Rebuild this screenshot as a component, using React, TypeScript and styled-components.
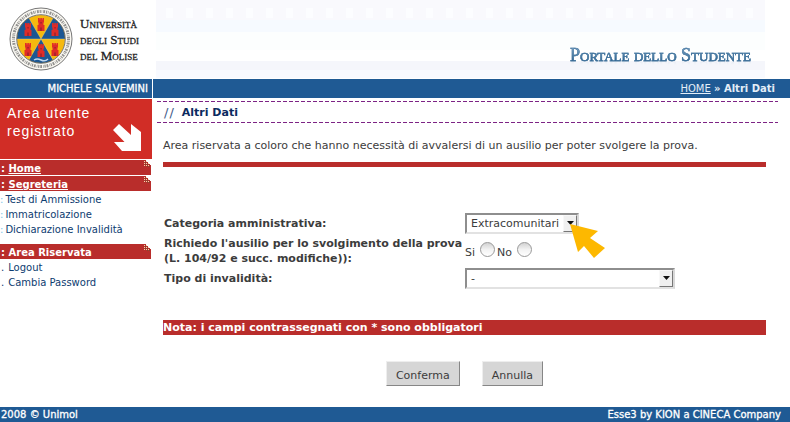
import React from "react";
import styled, { createGlobalStyle, css } from "styled-components";

const BLUE = "#1f5a94";
const RED = "#b92d2b";
const LINK = "#0d3c70";
const INK = "#3c3c3c";

const GlobalStyle = createGlobalStyle`
  * { box-sizing: border-box; }
  body {
    margin: 0;
    background: #fff;
    color: ${INK};
    font-family: "DejaVu Sans", Verdana, sans-serif;
    font-size: 11px;
    line-height: 15px;
  }
`;

const Header = styled.header`
  display: flex;
  height: 79px;
`;

const Brand = styled.div`
  display: flex;
  flex: none;
  align-items: center;
  gap: 6px;
  width: 156px;
  padding-left: 8px;
`;

const BrandName = styled.div`
  font-family: "Liberation Serif", serif;
  font-size: 13px;
  line-height: 16px;
  font-variant: small-caps;
  color: #222;
  -webkit-text-stroke: 0.3px #222;
  white-space: nowrap;
`;

const Banner = styled.div`
  display: flex;
  flex: 1;
  justify-content: flex-end;
  align-items: flex-end;
  margin-right: 25px;
  padding: 0 14px 14px 0;
  background:
    repeating-linear-gradient(90deg, transparent 0 10px, #fcfdff 10px 17px, transparent 17px 20px) 0 8px / 100% 10px no-repeat,
    linear-gradient(#f9f9fd 0 20px, #f6faff 20px 32px, #fcfefe 32px 50px, #fff 50px 61px, #f5f6fb 61px 70px, #f8faff 70px 78px, #fff 78px);
`;

const PortalName = styled.div`
  font-family: "Liberation Serif", serif;
  font-size: 18px;
  line-height: 20px;
  font-variant: small-caps;
  color: transparent;
  background: linear-gradient(#7fa6c9 15%, #43769f 60%, #1d5588 85%);
  background-clip: text;
  -webkit-text-stroke: 0.5px #47779f;
  -webkit-box-reflect: below -8px linear-gradient(transparent 60%, rgba(0, 0, 0, 0.15));
  white-space: nowrap;
`;

const TopBar = styled.div`
  display: flex;
  height: 19px;
  line-height: 20px;
  color: #fff;
  background: ${BLUE};
`;

const UserName = styled.div`
  flex: none;
  width: 153px;
  padding-right: 4px;
  border-right: 1px solid #fff;
  font-size: 10px;
  text-align: right;
  -webkit-text-stroke: 0.3px #fff;
`;

const Breadcrumb = styled.nav`
  flex: 1;
  padding-right: 15px;
  font-size: 10px;
  text-align: right;
  color: #e4eef8;

  a { color: inherit; }
`;

const Body = styled.div`
  display: flex;
`;

const Sidebar = styled.aside`
  flex: none;
  width: 152px;
  padding-top: 1px;
`;

const AreaBanner = styled.div`
  display: flex;
  justify-content: space-between;
  height: 60px;
  margin-bottom: 1px;
  padding: 5px 11px 8px 7px;
  color: #fff;
  background: #d12d26;
  font-family: "Liberation Sans", Arial, sans-serif;
  font-size: 14px;
  line-height: 18px;
  letter-spacing: 1px;

  svg { flex: none; align-self: flex-end; margin-left: -10px; }
`;

const MenuHeading = styled.h2`
  display: flex;
  justify-content: space-between;
  height: 15px;
  margin: 0 1px 1px 0;
  padding-left: 1px;
  color: #fff;
  background: ${RED};
  font-size: 10px;
  line-height: 17px;

  a { color: inherit; }
`;

const Menu = styled.ul<{ $dotted?: boolean }>`
  margin: 0;
  padding: 0 0 7px;
  list-style: none;
  font-size: 10px;
  line-height: 15px;
  color: ${(p) => (p.$dotted ? LINK : "#7fc4e8")};

  li { display: flex; gap: ${(p) => (p.$dotted ? 4 : 2)}px; padding-left: ${(p) => (p.$dotted ? 1 : 0)}px; }
  a { color: ${LINK}; text-decoration: none; white-space: nowrap; }
`;

const Main = styled.main`
  flex: 1;
  padding: 3px 12px 0 5px;
`;

const dashes = css`
  repeating-linear-gradient(90deg, #7d2385 0 4px, transparent 4px 6px)
`;

const Title = styled.h1`
  display: flex;
  gap: 7px;
  margin: 0 0 15px;
  padding: 4px 7px 3px;
  color: #0b2a5e;
  background: ${dashes} 0 0 / 100% 1px no-repeat, ${dashes} 0 100% / 100% 1px no-repeat;
  font-size: 11px;
  line-height: 15px;

  span { font-size: 13px; font-weight: normal; letter-spacing: 1px; color: #3f5b88; }
`;

const Content = styled.div`
  margin: 0 12px 0 6px;
`;

const Intro = styled.p`
  margin: 0 0 9px;
`;

const Rule = styled.hr`
  height: 5px;
  margin: 0 0 45px;
  border: 0;
  background: ${RED};
`;

const Fields = styled.div`
  display: grid;
  grid-template-columns: 301px 1fr;
  row-gap: 1px;
  padding-left: 1px;
`;

const Label = styled.label`
  align-self: center;
  font-weight: bold;
`;

const Control = styled.div`
  display: flex;
  align-items: center;
  min-height: 22px;
`;

const SelectBox = styled.div<{ $wide?: boolean }>`
  position: relative;
  width: ${(p) => (p.$wide ? 210 : 114)}px;
`;

const Select = styled.select`
  display: block;
  appearance: none;
  width: 100%;
  height: 21px;
  padding: 1px 16px 0 4px;
  border: 2px solid #8e8e8e;
  border-right-color: #d8d8d8;
  border-bottom-color: #e2e2e2;
  border-radius: 0;
  background: #fff;
  color: ${INK};
  font: 11px "DejaVu Sans", sans-serif;
`;

const SelectArrow = styled.span`
  position: absolute;
  top: 2px;
  right: 2px;
  bottom: 2px;
  display: flex;
  align-items: center;
  justify-content: center;
  width: 14px;
  border: 1px solid #f8f8f8;
  border-right-color: #777;
  border-bottom-color: #777;
  background: #f0f0f0;
  pointer-events: none;
`;

const Pointer = styled.svg`
  position: absolute;
  top: 11px;
  left: 105px;
  pointer-events: none;
`;

const RadioGroup = styled.div`
  display: flex;
  align-items: center;
  height: 31px;
  gap: 2px;

  label { padding-top: 4px; }
`;

const Radio = styled.input`
  appearance: none;
  width: 15px;
  height: 15px;
  margin: 0 0 3px 3px;
  border: 1px solid #999;
  border-radius: 50%;
  background: linear-gradient(#d2d2d2, #f2f2f2 50%, #fff);

  &:checked { background: radial-gradient(#333 0 3px, #eee 4px); }
`;

const Note = styled.p`
  margin: 31px 0 26px;
  color: #fff;
  background: ${RED};
  font-weight: bold;
  line-height: 15px;
`;

const Actions = styled.div`
  display: flex;
  justify-content: center;
  gap: 22px;
  margin-bottom: 21px;
`;

const Button = styled.button`
  height: 25px;
  padding: 3px 9px 0;
  border: 1px solid #eee;
  border-right-color: #868686;
  border-bottom-color: #868686;
  background: #d6d6d6;
  color: ${INK};
  font: 11px "DejaVu Sans", sans-serif;
`;

const Footer = styled.footer`
  display: flex;
  justify-content: space-between;
  padding: 1px 9px 0 1px;
  color: #fff;
  background: ${BLUE};
  font-size: 10px;
  line-height: 14px;
  -webkit-text-stroke: 0.3px #fff;
`;

const towers = [
  [33, 11], [20, 16], [47, 16], [20, 36], [47, 36], [33, 37],
];

const Seal = () => (
  <svg width="66" height="66" viewBox="0 0 66 66" role="img" aria-label="Sigillo">
    <defs>
      <clipPath id="disc"><circle cx="33" cy="32" r="24" /></clipPath>
    </defs>
    <circle cx="33" cy="32" r="31" fill="#faf8f2" stroke="#777" strokeWidth="1" />
    <circle cx="33" cy="32" r="27.500" fill="none" stroke="#666" strokeWidth="3" strokeDasharray="1.200 .8 .6 1.100 1.800 .9" opacity=".7" />
    <g clipPath="url(#disc)">
      <rect width="66" height="66" fill="#f5b90f" />
      <path d="M33 32 4 32V0H14.500ZM33 32 62 32V0H51.500ZM33 32 16 62H50Z" fill="#1c5794" />
      <path d="M4 32H62M14.500 0 51.500 64M51.500 0 14.500 64" stroke="#e8d9a0" strokeWidth=".4" />
    </g>
    <circle cx="33" cy="32" r="24.300" fill="none" stroke="#555" strokeWidth=".8" />
    {towers.map(([x, y]) => (
      <g key={`${x}-${y}`} transform={`translate(${x - 4} ${y})`}>
        <path d="M1 0H2.700V1.500H3.300V0H4.900V1.500H5.500V0H7V4.500H6.500V7H7.500V13H.5V7H1.500V4.500H1Z" fill="#e02c28" />
        <path d="M3.500 9.500h1V13h-1zM3.600 4h.9v1.500h-.9z" fill="#7a1c31" />
      </g>
    ))}
    <path d="M26 53q3-2 7 0t7-1" fill="none" stroke="#bed7ee" strokeWidth="1.500" />
  </svg>
);

const Corner = () => (
  <svg width="8" height="8" viewBox="0 0 8 8" shapeRendering="crispEdges" aria-hidden="true">
    <path d="M2 0H8V6Z" fill="#fff" />
    <path d="M1 1h1v1H1zM3 1h1v1H3zM1 3h1v1H1zM3 3h1v1H3zM5 3h1v1H5zM1 5h1v1H1zM3 5h1v1H3zM5 5h1v1H5z" fill="#f0dcb0" />
    <path d="M2 2h1v1H2zM4 4h1v1H4zM2 4h1v1H2zM6 6h1v1H6zM4 6h1v1H4z" fill="#7d4a30" />
  </svg>
);

const ArrowGlyph = () => (
  <SelectArrow aria-hidden="true">
    <svg width="7" height="4" viewBox="0 0 7 4"><path d="M0 0H7L3.500 4Z" fill="#111" /></svg>
  </SelectArrow>
);

export default function App() {
  return (
    <>
      <GlobalStyle />
      <Header>
        <Brand>
          <Seal />
          <BrandName>Università<br />degli Studi<br />del Molise</BrandName>
        </Brand>
        <Banner><PortalName>Portale dello Studente</PortalName></Banner>
      </Header>
      <TopBar>
        <UserName>MICHELE SALVEMINI</UserName>
        <Breadcrumb><a href="#home">HOME</a> <b>» Altri Dati</b></Breadcrumb>
      </TopBar>
      <Body>
        <Sidebar>
          <AreaBanner>
            <div>Area utente<br />registrato</div>
            <svg width="28" height="27" viewBox="0 0 28 27" aria-hidden="true">
              <path d="M0 6 6 0 18 11V0L28 8V27H9L1 18H11.500Z" fill="#fff" />
            </svg>
          </AreaBanner>
          <MenuHeading><span>: <a href="#home">Home</a></span><Corner /></MenuHeading>
          <MenuHeading><span>: <a href="#segreteria">Segreteria</a></span><Corner /></MenuHeading>
          <Menu>
            <li>:<a href="#test">Test di Ammissione</a></li>
            <li>:<a href="#immatricolazione">Immatricolazione</a></li>
            <li>:<a href="#invalidita">Dichiarazione Invalidità</a></li>
          </Menu>
          <MenuHeading><span>: Area Riservata</span><Corner /></MenuHeading>
          <Menu $dotted>
            <li>.<a href="#logout">Logout</a></li>
            <li>.<a href="#password">Cambia Password</a></li>
          </Menu>
        </Sidebar>
        <Main>
          <Title><span>//</span> Altri Dati</Title>
          <Content>
            <Intro>Area riservata a coloro che hanno necessità di avvalersi di un ausilio per poter svolgere la prova.</Intro>
            <Rule />
            <form onSubmit={(e) => e.preventDefault()}>
              <Fields>
                <Label htmlFor="categoria">Categoria amministrativa:</Label>
                <Control>
                  <SelectBox>
                    <Select id="categoria"><option>Extracomunitari</option></Select>
                    <ArrowGlyph />
                    <Pointer width="36" height="36" viewBox="0 0 36 36" aria-hidden="true">
                      <path d="M0 0 28 7 20 14 35 24 24 34 14 22 8 28Z" fill="#fdb800" />
                    </Pointer>
                  </SelectBox>
                </Control>
                <Label as="div" id="ausilio">Richiedo l'ausilio per lo svolgimento della prova (L. 104/92 e succ. modifiche)):</Label>
                <RadioGroup role="radiogroup" aria-labelledby="ausilio">
                  <label htmlFor="si">Si</label>
                  <Radio type="radio" id="si" name="ausilio" />
                  <label htmlFor="no">No</label>
                  <Radio type="radio" id="no" name="ausilio" />
                </RadioGroup>
                <Label htmlFor="tipo">Tipo di invalidità:</Label>
                <Control>
                  <SelectBox $wide>
                    <Select id="tipo"><option>-</option></Select>
                    <ArrowGlyph />
                  </SelectBox>
                </Control>
              </Fields>
              <Note>Nota: i campi contrassegnati con * sono obbligatori</Note>
              <Actions>
                <Button type="submit">Conferma</Button>
                <Button type="reset">Annulla</Button>
              </Actions>
            </form>
          </Content>
        </Main>
      </Body>
      <Footer><span>2008 © Unimol</span><span>Esse3 by KION a CINECA Company</span></Footer>
    </>
  );
}
